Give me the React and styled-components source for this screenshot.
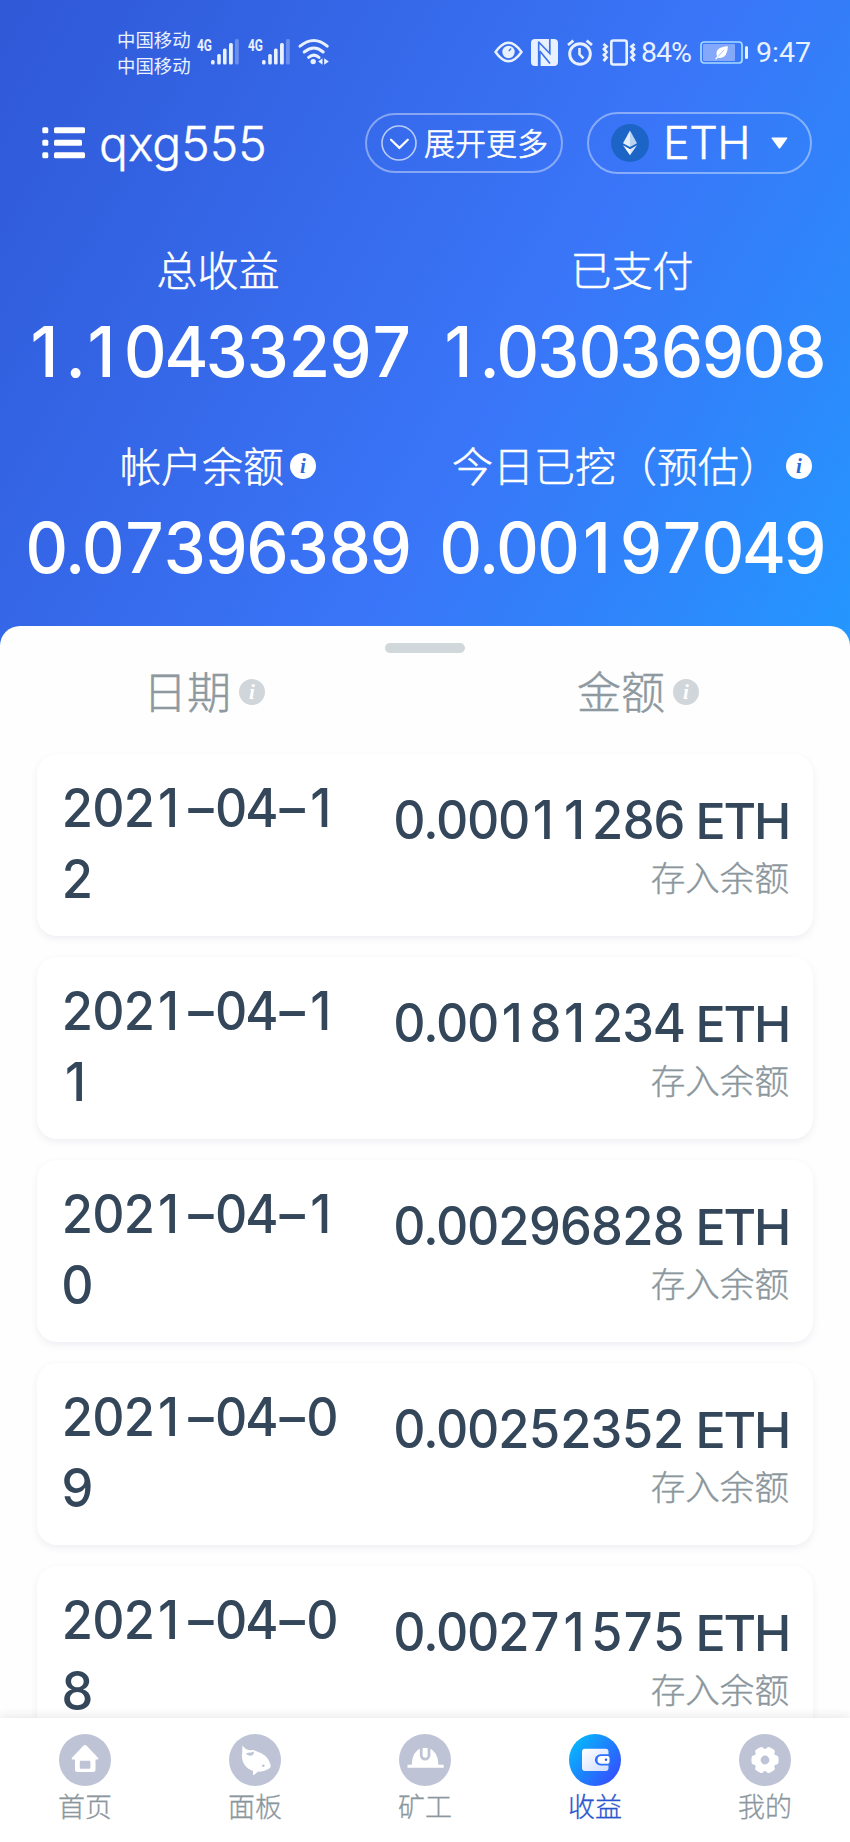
import React from "react";
import styled, { createGlobalStyle } from "styled-components";

const GlobalStyle = createGlobalStyle`
  * { box-sizing: border-box; }
  html, body { margin: 0; padding: 0; }
  body {
    width: 850px;
    height: 1842px;
    overflow: hidden;
    font-family: Inter, "Noto Sans CJK SC", sans-serif;
    background: #fff;
  }
  svg { display: block; flex: none; overflow: visible; }
`;

const Screen = styled.div`
  width: 850px;
  height: 1842px;
  display: flex;
  flex-direction: column;
  overflow: hidden;
  background: linear-gradient(120deg, #2f58d6 0, #3a75f8 620px, #3083fa 820px, #2498ff 1070px, #2498ff 100%);
`;

const StatusBar = styled.div`
  height: 104px;
  padding: 26px 39px 0 117px;
  display: flex;
  align-items: flex-start;
  justify-content: space-between;
  color: #e9f1ff;
`;

const StatusGroup = styled.div`
  display: flex;
  align-items: flex-start;
`;

const Carriers = styled.div`
  width: 80px;
  font: 400 18.4px/26px "Noto Sans CJK SC", sans-serif;
`;

const StatusIcon = styled.svg`
  margin: 13px 0 0 ${(p) => p.$gap || 0}px;
`;

const StatusText = styled.div`
  margin: 9px 0 0 ${(p) => p.$gap}px;
  width: ${(p) => p.$width}px;
  font: 400 28.5px/36px Roboto, sans-serif;
  letter-spacing: ${(p) => p.$track || 0}px;
  white-space: nowrap;
`;

const AccountBar = styled.div`
  height: 78px;
  padding: 0 38px 0 42px;
  display: flex;
  align-items: center;
  color: #fff;
`;

const AccountName = styled.div`
  margin: 2px 0 0 13px;
  flex: 1;
  font-size: 48px;
  font-weight: 300;
  line-height: 60px;
  letter-spacing: 0;
  -webkit-text-stroke: 0.4px #fff;
`;

const Pill = styled.div`
  width: ${(p) => p.$width}px;
  height: ${(p) => p.$height}px;
  padding-left: ${(p) => p.$pad}px;
  margin-left: ${(p) => p.$gap || 0}px;
  border: 2.5px solid rgba(255, 255, 255, 0.4);
  border-radius: 31px;
  display: flex;
  align-items: center;
`;

const MoreLabel = styled.span`
  margin: -3px 0 0 7px;
  font: 300 31px/40px "Noto Sans CJK SC", sans-serif;
  -webkit-text-stroke: 0.6px #fff;
`;

const CoinLabel = styled.span`
  margin: 0 15px 0 14px;
  width: 93px;
  font-size: 45px;
  font-weight: 300;
  line-height: 50px;
  letter-spacing: -0.6px;
  -webkit-text-stroke: 0.4px #fff;
`;

const Stats = styled.div`
  height: 444px;
  flex: none;
  padding: 56px 11px 0;
  display: grid;
  grid-template-columns: 414px 414px;
  grid-auto-rows: 196px;
  color: #fff;
`;

const Stat = styled.div`
  display: flex;
  flex-direction: column;
  align-items: center;
`;

const StatLabel = styled.div`
  height: 60px;
  display: flex;
  align-items: center;
  gap: 6px;
  font: 300 41px/60px "Noto Sans CJK SC", sans-serif;
  -webkit-text-stroke: 0.5px #fff;
  white-space: nowrap;

  svg {
    margin-top: 3px;
    -webkit-text-stroke: 0;
  }
`;

const StatValue = styled.div`
  height: 90px;
  margin-top: 9px;
  font-size: 70px;
  font-weight: 500;
  line-height: 90px;
  font-variant-numeric: tabular-nums;
  letter-spacing: -2.6px;
  white-space: nowrap;
  transform: scaleX(0.96);
`;

const One = styled.span`
  font-variant-numeric: proportional-nums;
  padding: 0 0.16em 0 0.08em;
`;

const Dash = styled.span`
  padding: 0 0.06em;
`;

const Sheet = styled.main`
  flex: 1;
  min-height: 0;
  padding: 17px 37px 0;
  border-radius: 20px 20px 0 0;
  background: #fefefe;
  overflow: hidden;
`;

const Handle = styled.div`
  width: 80px;
  height: 10px;
  margin: 0 auto;
  border-radius: 5px;
  background: #d0d8dc;
`;

const Columns = styled.div`
  height: 101px;
  padding: 8px 0 0 106px;
  display: grid;
  grid-template-columns: 434px 1fr;
  color: #8e999f;
`;

const ColumnTitle = styled.div`
  height: 58px;
  display: flex;
  align-items: center;
  gap: 8px;
  font: 300 44px/58px "Noto Sans CJK SC", sans-serif;
  -webkit-text-stroke: 0.5px #8e999f;

  svg {
    margin-top: 3px;
    -webkit-text-stroke: 0;
  }
`;

const Card = styled.article`
  height: 182px;
  margin-bottom: 21px;
  padding: 19px 24px 0;
  border-radius: 20px;
  background: #fff;
  box-shadow: 0 3px 7px rgba(60, 70, 130, 0.08);
  display: flex;
  justify-content: space-between;
  color: #34475a;
`;

const DateText = styled.div`
  width: 306px;
  margin-right: -20px;
  font-size: 53px;
  font-weight: 500;
  line-height: 71px;
  font-variant-numeric: tabular-nums;
  letter-spacing: -2px;
  word-break: break-all;
  transform: scaleX(0.957);
  transform-origin: left;
`;

const Entry = styled.div`
  padding-top: 12px;
  display: flex;
  flex-direction: column;
  align-items: flex-end;
`;

const Amount = styled.div`
  font-size: 53px;
  font-weight: 500;
  line-height: 71px;
  font-variant-numeric: tabular-nums;
  letter-spacing: -2px;
  white-space: nowrap;
`;

const Figure = styled.span`
  display: inline-block;
  transform: scaleX(0.957);
  transform-origin: right;
`;

const Unit = styled.span`
  margin-left: 12px;
  font-size: 50px;
  font-weight: 450;
  letter-spacing: -2.2px;
`;

const EntryNote = styled.div`
  font: 300 34.6px/48px "Noto Sans CJK SC", sans-serif;
  margin-top: -5px;
  color: #8b979d;
  -webkit-text-stroke: 0.4px #8b979d;
`;

const NavBar = styled.nav`
  position: relative;
  height: 124px;
  flex: none;
  padding-top: 16px;
  display: grid;
  grid-template-columns: repeat(5, 1fr);
  background: #fff;
  box-shadow: 0 -2px 10px rgba(0, 0, 0, 0.09);
`;

const NavItem = styled.div`
  display: flex;
  flex-direction: column;
  align-items: center;
  font: 300 27px/40px "Noto Sans CJK SC", sans-serif;
  color: ${(p) => (p.$active ? "#2a55cf" : "#8b979d")};
  -webkit-text-stroke: 0.3px currentColor;
`;

const InfoIcon = ({ fill = "#fff", ink = "#2f68d8" }) => (
  <svg width="26" height="26" viewBox="0 0 26 26">
    <circle cx="13" cy="13" r="13" fill={fill} />
    <text x="13" y="20" textAnchor="middle" fontFamily="Liberation Serif, serif" fontStyle="italic" fontWeight="700" fontSize="21" fill={ink}>i</text>
  </svg>
);

const Signal = ({ gap }) => (
  <StatusIcon $gap={gap} width="42" height="27" viewBox="0 0 42 27" fill="#e9f1ff">
    <text x="0" y="12" textLength="15" lengthAdjust="spacingAndGlyphs" fontFamily="Roboto, sans-serif" fontWeight="700" fontSize="16">4G</text>
    <rect x="14" y="21" width="3.6" height="4.6" rx="1.5" />
    <rect x="20.2" y="15" width="3.6" height="10.6" rx="1.5" />
    <rect x="26" y="9.5" width="3.6" height="16.1" rx="1.5" />
    <rect x="32" y="4" width="3.8" height="21.6" rx="1.5" />
    <rect x="38" y="0" width="3.8" height="25.6" rx="1.5" opacity="0.3" />
  </StatusIcon>
);

const Wifi = () => (
  <StatusIcon $gap={8} width="32" height="26" viewBox="0 0 32 26" fill="none" stroke="#e9f1ff" strokeWidth="3" strokeLinecap="round">
    <path d="M2 7.2Q16-4.2 29.2 7.2M6.2 13Q16 5 25.2 13M10.6 18.4Q16 13.8 21 18.4" />
    <circle cx="15.2" cy="22.6" r="2.7" fill="#e9f1ff" stroke="none" />
    <path d="M20.2 22.6l4.3-3.4v6.6zM26.2 19.2v6.6l4.6-3.4z" fill="#e9f1ff" stroke="none" />
  </StatusIcon>
);

const Eye = () => (
  <StatusIcon width="29" height="26" viewBox="0 0 29 26" fill="none" stroke="#e9f1ff" strokeWidth="2.5">
    <path d="M1.5 13Q14.5-5.5 27.5 13Q14.5 31.5 1.5 13Z" strokeLinejoin="round" />
    <circle cx="14.5" cy="13" r="6.2" fill="#e9f1ff" stroke="none" />
    <path d="M14.8 12l2.2-2.5" stroke="#3b73ee" strokeWidth="1.3" />
  </StatusIcon>
);

const Nfc = () => (
  <StatusIcon $gap={8} width="27" height="27" viewBox="0 0 27 27">
    <rect width="27" height="27" rx="4" fill="#e9f1ff" />
    <path d="M7.7 27V2.5M7.7 3L18.8 14.5V0M8.8 12L19 24.5M8.8 12V27" fill="none" stroke="#3b73ee" strokeWidth="1.7" />
  </StatusIcon>
);

const Alarm = () => (
  <StatusIcon $gap={9} width="26" height="27" viewBox="0 0 26 27" fill="none" stroke="#e9f1ff" strokeWidth="3">
    <circle cx="13" cy="15" r="10.3" />
    <path d="M12.5 9v6.3l4 4" strokeWidth="2.6" />
    <path d="M1 6l5.4-4.3M25 6l-5.4-4.3" strokeWidth="2.8" />
  </StatusIcon>
);

const Vibrate = () => (
  <StatusIcon $gap={9} width="34" height="27" viewBox="0 0 34 27" fill="none" stroke="#e9f1ff">
    <rect x="9.3" y="1.5" width="15.4" height="24" rx="2" strokeWidth="2.6" />
    <path d="M1.5 5l3 2.5-2.5 2.5 2.5 3-2.5 3 2.5 2.5-3 3.5M32.5 5L29.5 7.5l2.5 2.5-2.5 3 2.5 3-2.5 2.5 3 3.5" strokeWidth="2.8" />
  </StatusIcon>
);

const Battery = () => (
  <StatusIcon $gap={7} width="49" height="26" viewBox="0 0 49 26">
    <rect x="1" y="3" width="41" height="21" rx="3" fill="none" stroke="#a8dcff" strokeWidth="1.7" />
    <rect x="3" y="5" width="32" height="17" rx="1" fill="#84a9fb" />
    <path d="M15 20l2-2.5Q14 8 28 7.3Q27 21 17.8 18.8L16.2 20.5Z" fill="#fff" />
    <path d="M18 17.5L24 11" stroke="#8fb0fb" strokeWidth="0.8" />
    <rect x="45" y="7" width="3" height="13" rx="1.5" fill="#e9f1ff" />
  </StatusIcon>
);

const ListIcon = () => (
  <svg width="44" height="32" viewBox="0 0 44 32" fill="#fff">
    {[0, 12.5, 25].map((y, i) => (
      <g key={y}>
        <rect x="0.3" y={y + 0.2} width="6" height="6" rx="1.5" />
        <rect x="12" y={y + 0.2} width={i === 1 ? 28 : 31} height="6" rx="1.5" />
      </g>
    ))}
  </svg>
);

const Expand = () => (
  <svg width="36" height="36" viewBox="0 0 36 36" fill="none" stroke="#fff">
    <circle cx="18" cy="18" r="17" strokeWidth="1.6" opacity="0.65" />
    <path d="M10 14.7l8.4 8.2 8.4-8.2" strokeWidth="2.2" strokeLinecap="round" />
  </svg>
);

const EthCoin = () => (
  <svg width="38" height="38" viewBox="0 0 38 38">
    <circle cx="19" cy="19" r="19" fill="#1c65c7" />
    <path d="M19 6.5L12 19.3l7 3.8z" fill="#e3eefb" />
    <path d="M19 6.5l7 12.8-7 3.8z" fill="#b9d3f3" />
    <path d="M12 21.2l7 4v6z" fill="#fff" />
    <path d="M26 21.2l-7 4v6z" fill="#dce9fa" />
  </svg>
);

const Caret = () => (
  <svg width="17" height="12" viewBox="0 0 17 12">
    <path d="M1.2 .5h14.6q1 0 .4 1L9.4 11q-.9 1-1.8 0L.7 1.5Q.2 .5 1.2 .5Z" fill="#fff" />
  </svg>
);

const Disc = ({ children, fill = "#bec4d6" }) => (
  <svg width="52" height="52" viewBox="0 0 52 52">
    <defs>
      <linearGradient id="activeDisc" x1="0.05" y1="0.15" x2="0.9" y2="0.85">
        <stop offset="0" stopColor="#05b9fc" />
        <stop offset="1" stopColor="#3450ff" />
      </linearGradient>
      <linearGradient id="wallet" x1="0" y1="0" x2="1" y2="1">
        <stop offset="0" stopColor="#fff" />
        <stop offset="1" stopColor="#cfdcfc" />
      </linearGradient>
    </defs>
    <circle cx="26" cy="26" r="26" fill={fill} />
    {children}
  </svg>
);

const icons = {
  home: (
    <Disc>
      <path d="M24.3 11.8q1.7-1.5 3.4 0L39 23.8q1 1.8-1 1.8H14q-2 0-1-1.8Z" fill="#fff" />
      <path d="M16 24h20.5v11.5q0 2.5-2.5 2.5H18.5Q16 38 16 35.5Z" fill="#fff" />
      <rect x="20.8" y="26.8" width="10.6" height="8" rx="1" fill="#bec4d6" />
    </Disc>
  ),
  whale: (
    <Disc>
      <path d="M13.4 11.2Q16 15.5 21 16.3Q25 15.6 28 17.5Q37.5 20.5 40.5 28Q42.5 31.5 41 34Q36 37.8 28.5 37.7Q27 40 24 41V37Q17 34.5 14.2 28.5Q12.3 24 13.2 18.5Z" fill="#fff" />
      <path d="M16.7 19.8Q20 18.3 22.3 18.6L24.8 17.6Q25.5 22 21 21.7Q18.5 21.5 16.7 19.8Z" fill="#bec4d6" />
      <circle cx="34.3" cy="31.8" r="1.3" fill="#bec4d6" />
    </Disc>
  ),
  helmet: (
    <Disc>
      <path d="M8.5 33.8v-3h4.3Q13 17.5 22 14h8Q39 17.5 39.4 30.8h5.3v3Z" fill="#fff" />
      <path d="M22.2 14v7.3a3.9 3.9 0 0 0 7.8 0V14" fill="#fff" stroke="#bec4d6" strokeWidth="2.8" />
    </Disc>
  ),
  wallet: (
    <Disc fill="url(#activeDisc)">
      <rect x="13" y="14.8" width="26.5" height="22.3" rx="3" fill="url(#wallet)" />
      <path d="M42 20.3H31.5a5.5 5.5 0 0 0 0 11.2H42Z" fill="#2c70fe" />
      <path d="M38.5 22.1H32.3a3.8 3.8 0 0 0 0 7.6h6.2q2 0 2-2v-3.6q0-2-2-2Z" fill="#fff" />
      <circle cx="37" cy="25.8" r="1.2" fill="#2c50f0" />
    </Disc>
  ),
  gear: (
    <Disc>
      {[0, 60, 120, 180, 240, 300].map((a) => (
        <rect key={a} x="33" y="21.3" width="6.5" height="9.4" rx="3" fill="#fff" transform={`rotate(${a} 26 26)`} />
      ))}
      <circle cx="26" cy="26" r="11.2" fill="#fff" />
      <circle cx="26" cy="26" r="4.4" fill="#bec4d6" />
    </Disc>
  ),
};

const stats = [
  { label: "总收益", value: "1.10433297" },
  { label: "已支付", value: "1.03036908" },
  { label: "帐户余额", value: "0.07396389", info: true },
  { label: "今日已挖（预估）", value: "0.00197049", info: true },
];

const entries = [
  ["2021–04–12", "0.00011286"],
  ["2021–04–11", "0.00181234"],
  ["2021–04–10", "0.00296828"],
  ["2021–04–09", "0.00252352"],
  ["2021–04–08", "0.00271575"],
];

const tabs = [
  ["首页", "home"],
  ["面板", "whale"],
  ["矿工", "helmet"],
  ["收益", "wallet"],
  ["我的", "gear"],
];

// Keeps every digit on the same pitch while using the "1" without a foot.
const Digits = ({ children }) =>
  children.split(/([1–])/).map((part, i) => {
    if (part === "1") return <One key={i}>1</One>;
    if (part === "–") return <Dash key={i}>–</Dash>;
    return part;
  });

export default function App() {
  return (
    <Screen>
      <GlobalStyle />
      <StatusBar>
        <StatusGroup>
          <Carriers>
            <div>中国移动</div>
            <div>中国移动</div>
          </Carriers>
          <Signal />
          <Signal gap={9} />
          <Wifi />
        </StatusGroup>
        <StatusGroup>
          <Eye />
          <Nfc />
          <Alarm />
          <Vibrate />
          <StatusText $gap={5} $width={52} $track={-1}>84%</StatusText>
          <Battery />
          <StatusText $gap={7} $width={55}>9:47</StatusText>
        </StatusGroup>
      </StatusBar>
      <AccountBar>
        <ListIcon />
        <AccountName>qxg555</AccountName>
        <Pill $width={198} $height={60} $pad={14}>
          <Expand />
          <MoreLabel>展开更多</MoreLabel>
        </Pill>
        <Pill $width={225} $height={62} $pad={22} $gap={24}>
          <EthCoin />
          <CoinLabel>ETH</CoinLabel>
          <Caret />
        </Pill>
      </AccountBar>
      <Stats>
        {stats.map((s) => (
          <Stat key={s.label}>
            <StatLabel>
              <span>{s.label}</span>
              {s.info && <InfoIcon />}
            </StatLabel>
            <StatValue>
              <Digits>{s.value}</Digits>
            </StatValue>
          </Stat>
        ))}
      </Stats>
      <Sheet>
        <Handle />
        <Columns>
          {["日期", "金额"].map((title) => (
            <ColumnTitle key={title}>
              <span>{title}</span>
              <InfoIcon fill="#d0d6da" ink="#fff" />
            </ColumnTitle>
          ))}
        </Columns>
        {entries.map(([date, amount]) => (
          <Card key={date}>
            <DateText>
              <Digits>{date}</Digits>
            </DateText>
            <Entry>
              <Amount>
                <Figure>
                  <Digits>{amount}</Digits>
                </Figure>
                <Unit>ETH</Unit>
              </Amount>
              <EntryNote>存入余额</EntryNote>
            </Entry>
          </Card>
        ))}
      </Sheet>
      <NavBar>
        {tabs.map(([label, icon]) => (
          <NavItem key={label} $active={icon === "wallet"}>
            {icons[icon]}
            <span>{label}</span>
          </NavItem>
        ))}
      </NavBar>
    </Screen>
  );
}
